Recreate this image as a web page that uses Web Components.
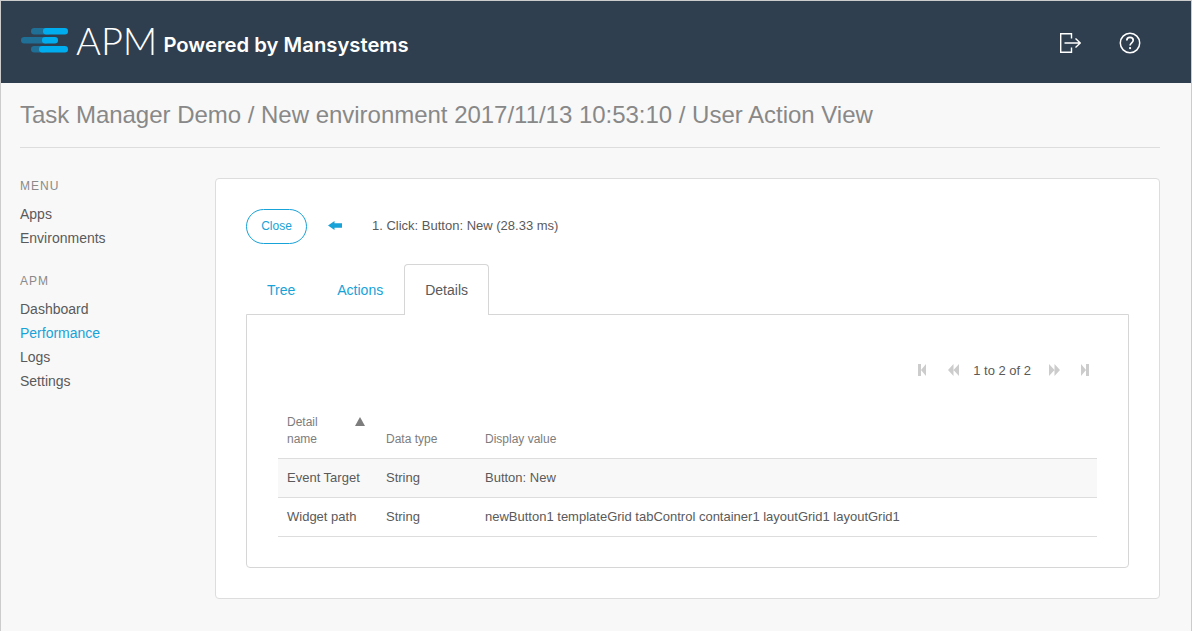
<!DOCTYPE html>
<html>
<head>
<meta charset="utf-8">
<style>
  html, body { margin: 0; height: 100%; }
  body { font-family: "Liberation Sans", Arial, sans-serif; background: #f8f8f8; }
</style>
</head>
<body>
<apm-app></apm-app>
<script>
const headerTemplate = document.createElement('template');
headerTemplate.innerHTML = `
  <style>
    :host {
      display: flex;
      align-items: center;
      height: 82px;
      background: #2f3f50;
      color: #fff;
      padding: 0 50px 0 20px;
    }
    .logo { display: flex; align-items: center; margin-top: -4px; }
    .apm {
      font: 300 38px/1 Lato, sans-serif;
      margin-left: 8px;
    }
    .by {
      font: 600 20.250px/1 Inter, sans-serif;
      margin: 11px 0 0 6px;
    }
    .icons { margin-left: auto; display: flex; gap: 38px; align-items: center; margin-top: 2px; }
    svg { display: block; }
  </style>
  <div class="logo">
    <svg width="47" height="26" viewBox="0 0 47 26">
      <rect x="10" y="1" width="20" height="6.500" rx="3.200" fill="#1f6f96"/>
      <rect x="22" y="1" width="25" height="6.500" rx="3.200" fill="#00aeef"/>
      <rect x="0" y="10" width="28" height="6.500" rx="3.200" fill="#1f6f96"/>
      <rect x="21" y="10" width="16" height="6.500" rx="3.200" fill="#00aeef"/>
      <rect x="10" y="19" width="16" height="6.500" rx="3.200" fill="#1f6f96"/>
      <rect x="18" y="19" width="29" height="6.500" rx="3.200" fill="#00aeef"/>
    </svg>
    <span class="apm">APM</span>
    <span class="by">Powered by Mansystems</span>
  </div>
  <div class="icons">
    <svg width="22" height="22" viewBox="0 0 22 22" fill="none" stroke="#fff" stroke-width="1.400">
      <path d="M12.500 6.500V1.700H1.700v18.600h10.800v-4.800"/>
      <path d="M5.500 11h15.500M16.500 6.500l4.800 4.500-4.800 4.500"/>
    </svg>
    <svg width="22" height="22" viewBox="0 0 22 22" fill="none" stroke="#fff" stroke-width="1.500">
      <circle cx="11" cy="11" r="9.700"/>
      <path d="M7.800 8.600c0-2 1.400-3.200 3.200-3.200s3.200 1.200 3.200 2.900c0 2.500-3.100 2.600-3.100 5.200" stroke-width="1.700"/>
      <path d="M11.100 15.100v2" stroke-width="1.900"/>
    </svg>
  </div>
`;
class ApmHeader extends HTMLElement {
  constructor() {
    super();
    this.attachShadow({ mode: 'open' }).appendChild(headerTemplate.content.cloneNode(true));
  }
}
customElements.define('apm-header', ApmHeader);

const navTemplate = document.createElement('template');
navTemplate.innerHTML = `
  <style>
    :host { display: block; margin-bottom: 21px; font-size: 14px; line-height: 24px; color: #5a5a5a; }
    .title { font-size: 12px; letter-spacing: 1px; color: #8a8a8a; line-height: 20px; margin-bottom: 6px; }
    ::slotted(a) { display: block; color: #5a5a5a; text-decoration: none; }
    ::slotted(a.on) { color: #17a2d8; }
  </style>
  <div class="title"></div>
  <slot></slot>
`;
class NavGroup extends HTMLElement {
  constructor() {
    super();
    this.attachShadow({ mode: 'open' }).appendChild(navTemplate.content.cloneNode(true));
    this.shadowRoot.querySelector('.title').textContent = this.getAttribute('label');
  }
}
customElements.define('nav-group', NavGroup);

const pagerTemplate = document.createElement('template');
pagerTemplate.innerHTML = `
  <style>
    :host { display: flex; justify-content: flex-end; align-items: center; height: 20px; font-size: 13px; color: #5a5a5a; padding-right: 8px; }
    svg { display: block; fill: #ccc; }
    span { margin: 0 18px 0 14px; }
    .first { margin-right: 22px; }
    .next { margin-right: 21px; }
  </style>
  <svg class="first" width="8" height="12" viewBox="0 0 8 12"><path d="M0 0h3v12H0zM8 0v12L3 6z"/></svg>
  <svg width="11" height="12" viewBox="0 0 11 12"><path d="M5.500 0v12L0 6zM11 0v12L5.500 6z"/></svg>
  <span>1 to 2 of 2</span>
  <svg class="next" width="11" height="12" viewBox="0 0 11 12"><path d="M0 0v12l5.500-6zM5.500 0v12L11 6z"/></svg>
  <svg width="8" height="12" viewBox="0 0 8 12"><path d="M0 0v12l5-6zM5 0h3v12H5z"/></svg>
`;
class ApmPager extends HTMLElement {
  constructor() {
    super();
    this.attachShadow({ mode: 'open' }).appendChild(pagerTemplate.content.cloneNode(true));
  }
}
customElements.define('apm-pager', ApmPager);

const gridTemplate = document.createElement('template');
gridTemplate.innerHTML = `
  <style>
    :host { display: block; font-size: 13px; color: #5a5a5a; }
    .row { display: grid; grid-template-columns: 99px 99px 1fr; padding: 0 9px; border-bottom: 1px solid #ddd; }
    .head { font-size: 12px; line-height: 17px; color: #7d7d7d; align-items: end; padding-bottom: 10px; }
    .row.body { height: 36px; padding-bottom: 2px; align-items: center; }
    .alt { background: #f8f8f8; }
    .name { position: relative; width: 50px; }
    .sort { position: absolute; left: 68px; top: 3px; width: 0; height: 0; border: 5px solid transparent; border-top: 0; border-bottom: 9px solid #7d7d7d; }
  </style>
  <div class="row head">
    <div class="name">Detail name<i class="sort"></i></div>
    <div>Data type</div>
    <div>Display value</div>
  </div>
  <div class="row body alt"><div>Event Target</div><div>String</div><div>Button: New</div></div>
  <div class="row body"><div>Widget path</div><div>String</div><div>newButton1 templateGrid tabControl container1 layoutGrid1 layoutGrid1</div></div>
`;
class DetailGrid extends HTMLElement {
  constructor() {
    super();
    this.attachShadow({ mode: 'open' }).appendChild(gridTemplate.content.cloneNode(true));
  }
}
customElements.define('detail-grid', DetailGrid);

const tabsTemplate = document.createElement('template');
tabsTemplate.innerHTML = `
  <style>
    :host { display: block; font-size: 14px; }
    .bar { display: flex; height: 51px; position: relative; z-index: 1; }
    .tab { padding: 0 21px; line-height: 52px; color: #17a2d8; }
    .tab.on {
      color: #5a5a5a; background: #fff; padding: 0 20px;
      border: 1px solid #d6d6d6; border-bottom: 0; border-radius: 4px 4px 0 0;
      line-height: 50px; height: 51px; box-sizing: border-box;
    }
    .panel { border: 1px solid #d6d6d6; border-radius: 0 0 4px 4px; margin-top: -1px; padding: 45px 31px 30px; }
  </style>
  <div class="bar">
    <div class="tab">Tree</div>
    <div class="tab">Actions</div>
    <div class="tab on">Details</div>
  </div>
  <div class="panel"><slot></slot></div>
`;
class ApmTabs extends HTMLElement {
  constructor() {
    super();
    this.attachShadow({ mode: 'open' }).appendChild(tabsTemplate.content.cloneNode(true));
  }
}
customElements.define('apm-tabs', ApmTabs);

const appTemplate = document.createElement('template');
appTemplate.innerHTML = `
  <style>
    :host { display: block; height: 631px; box-sizing: border-box; border: 1px solid #ccc; border-bottom: 0; background: #f8f8f8; overflow: hidden; }
    main { padding: 0 31px 0 19px; }
    h1 { margin: 0; font-size: 24px; font-weight: 400; letter-spacing: -0.02px; line-height: 64px; height: 64px; color: #888; border-bottom: 1px solid #ddd; }
    .cols { display: flex; margin-top: 30px; }
    aside { width: 195px; flex: none; margin-top: -2px; }
    .card { flex: 1; background: #fff; border: 1px solid #ddd; border-radius: 4px; padding: 30px; }
    .top { display: flex; align-items: center; font-size: 12px; color: #5a5a5a; margin-bottom: 20px; }
    .close { width: 61px; height: 35px; box-sizing: border-box; border: 1px solid #17a2d8; border-radius: 18px; color: #17a2d8; text-align: center; line-height: 33px; }
    .back { margin: -2px 30px 0 21px; display: block; }
    .msg { font-size: 13px; margin-top: -3px; }
    .grid-gap { height: 34px; }
  </style>
  <apm-header></apm-header>
  <main>
    <h1>Task Manager Demo / New environment 2017/11/13 10:53:10 / User Action View</h1>
    <div class="cols">
      <aside>
        <nav-group label="MENU"><a>Apps</a><a>Environments</a></nav-group>
        <nav-group label="APM"><a>Dashboard</a><a class="on">Performance</a><a>Logs</a><a>Settings</a></nav-group>
      </aside>
      <section class="card">
        <div class="top">
          <div class="close">Close</div>
          <svg class="back" width="14" height="9" viewBox="0 0 14 9"><path d="M0 4.500L6.500 0V2.300H14V6.700H6.500V9z" fill="#17a2d8"/></svg>
          <span class="msg">1. Click: Button: New (28.33 ms)</span>
        </div>
        <apm-tabs>
          <apm-pager></apm-pager>
          <div class="grid-gap"></div>
          <detail-grid></detail-grid>
        </apm-tabs>
      </section>
    </div>
  </main>
`;
class ApmApp extends HTMLElement {
  constructor() {
    super();
    this.attachShadow({ mode: 'open' }).appendChild(appTemplate.content.cloneNode(true));
  }
}
customElements.define('apm-app', ApmApp);
</script>
</body>
</html>
